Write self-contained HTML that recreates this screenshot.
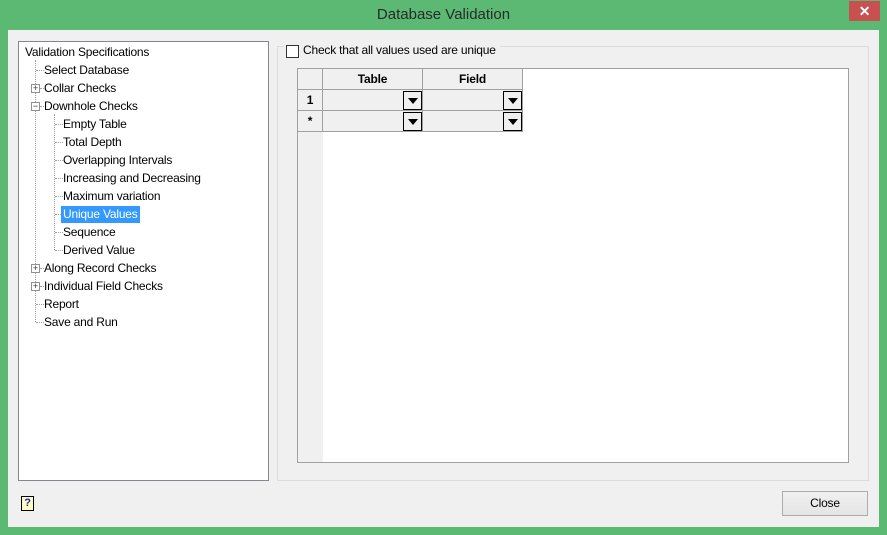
<!DOCTYPE html>
<html><head><style>
*{margin:0;padding:0;box-sizing:border-box}
body{width:887px;height:535px;background:#5cb973;font-family:"Liberation Sans",sans-serif;font-size:12px;color:#000;position:relative;overflow:hidden;letter-spacing:-0.2px}
.abs{position:absolute}
#title{left:0;top:6px;width:887px;text-align:center;font-size:15px;color:#2a2a2a;letter-spacing:0}
#x{left:849px;top:1px;width:31px;height:20px;background:#c75050;color:#fff;text-align:center;font-size:14px;font-weight:bold;line-height:20px}
#client{left:8px;top:30px;width:871px;height:497px;background:#f0f0f0}
#tree{left:18px;top:41px;width:251px;height:440px;background:#fff;border:1px solid #828790}
.t{position:absolute;white-space:nowrap;line-height:16px;height:17px}
.sel{background:#3399ff;color:#fff;padding:0 2px}
.dv{position:absolute;border-left:1px dotted #a0a0a0;width:0}
.dh{position:absolute;border-top:1px dotted #a0a0a0;height:0}
.pm{position:absolute;width:9px;height:9px;border:1px solid #919191;background:#fff;font-size:9px;line-height:7px;text-align:center;color:#333;letter-spacing:0}
#grp{left:277px;top:46px;width:592px;height:435px;border:1px solid #dcdcdc}
#cb{left:286px;top:45px;width:13px;height:13px;border:1px solid #333;background:#fff}
#grid{left:297px;top:68px;width:552px;height:395px;background:#fff;border:1px solid #a0a0a0}
.c{position:absolute;background:#f0f0f0;border-right:1px solid #a0a0a0;border-bottom:1px solid #a0a0a0;font-weight:bold;text-align:center;line-height:20px}
.dd{position:absolute;width:19px;height:19px;border:1px solid #000;background:#f0f0f0}
.dd:after{content:"";position:absolute;left:4px;top:6px;border-left:5px solid transparent;border-right:5px solid transparent;border-top:6px solid #000}
#close{left:782px;top:491px;width:86px;height:25px;border:1px solid #acacac;background:linear-gradient(#f0f0f0,#e5e5e5);text-align:center;line-height:23px}
</style></head><body>
<div id="title" class="abs">Database Validation</div>
<div id="x" class="abs">✕</div>
<div id="client" class="abs"></div>
<div id="tree" class="abs">
<div class="dv" style="left:16px;top:18px;height:262px"></div>
<div class="dv" style="left:35px;top:72px;height:136px"></div>
<div class="t" style="left:6px;top:2px">Validation Specifications</div>
<div class="dh" style="left:17px;top:28px;width:8px"></div><div class="t" style="left:25px;top:20px">Select Database</div>
<div class="pm" style="left:12px;top:42px">+</div><div class="dh" style="left:21px;top:46px;width:4px"></div><div class="t" style="left:25px;top:38px">Collar Checks</div>
<div class="pm" style="left:12px;top:60px">−</div><div class="dh" style="left:21px;top:64px;width:4px"></div><div class="t" style="left:25px;top:56px">Downhole Checks</div>
<div class="dh" style="left:36px;top:82px;width:8px"></div><div class="t" style="left:44px;top:74px">Empty Table</div>
<div class="dh" style="left:36px;top:100px;width:8px"></div><div class="t" style="left:44px;top:92px">Total Depth</div>
<div class="dh" style="left:36px;top:118px;width:8px"></div><div class="t" style="left:44px;top:110px">Overlapping Intervals</div>
<div class="dh" style="left:36px;top:136px;width:8px"></div><div class="t" style="left:44px;top:128px">Increasing and Decreasing</div>
<div class="dh" style="left:36px;top:154px;width:8px"></div><div class="t" style="left:44px;top:146px">Maximum variation</div>
<div class="dh" style="left:36px;top:172px;width:6px"></div><div class="t sel" style="left:42px;top:164px">Unique Values</div>
<div class="dh" style="left:36px;top:190px;width:8px"></div><div class="t" style="left:44px;top:182px">Sequence</div>
<div class="dh" style="left:36px;top:208px;width:8px"></div><div class="t" style="left:44px;top:200px">Derived Value</div>
<div class="pm" style="left:12px;top:222px">+</div><div class="dh" style="left:21px;top:226px;width:4px"></div><div class="t" style="left:25px;top:218px">Along Record Checks</div>
<div class="pm" style="left:12px;top:240px">+</div><div class="dh" style="left:21px;top:244px;width:4px"></div><div class="t" style="left:25px;top:236px">Individual Field Checks</div>
<div class="dh" style="left:17px;top:262px;width:8px"></div><div class="t" style="left:25px;top:254px">Report</div>
<div class="dh" style="left:17px;top:280px;width:8px"></div><div class="t" style="left:25px;top:272px">Save and Run</div>
</div>
<div id="grp" class="abs"></div>
<div class="abs" style="left:284px;top:43px;width:216px;height:16px;background:#f0f0f0"></div>
<div id="cb" class="abs"></div>
<div class="abs" style="left:303px;top:43px">Check that all values used are unique</div>
<div id="grid" class="abs">
<div class="abs" style="left:0;top:0;width:25px;height:393px;background:#f0f0f0"></div>
<div class="c" style="left:0;top:0;width:25px;height:21px"></div>
<div class="c" style="left:25px;top:0;width:100px;height:21px">Table</div>
<div class="c" style="left:125px;top:0;width:100px;height:21px">Field</div>
<div class="c" style="left:0;top:21px;width:25px;height:21px">1</div>
<div class="c" style="left:25px;top:21px;width:100px;height:21px"></div>
<div class="c" style="left:125px;top:21px;width:100px;height:21px"></div>
<div class="c" style="left:0;top:42px;width:25px;height:21px">*</div>
<div class="c" style="left:25px;top:42px;width:100px;height:21px"></div>
<div class="c" style="left:125px;top:42px;width:100px;height:21px"></div>
<div class="dd" style="left:105px;top:22px"></div><div class="dd" style="left:205px;top:22px"></div>
<div class="dd" style="left:105px;top:43px"></div><div class="dd" style="left:205px;top:43px"></div>
</div>
<div class="abs" style="left:21px;top:496px;width:13px;height:15px;border:1px solid #000;background:#ffffc0;font-size:11px;font-weight:bold;color:#2020c0;text-align:center;line-height:13px">?</div>
<div id="close" class="abs">Close</div>
</body></html>
